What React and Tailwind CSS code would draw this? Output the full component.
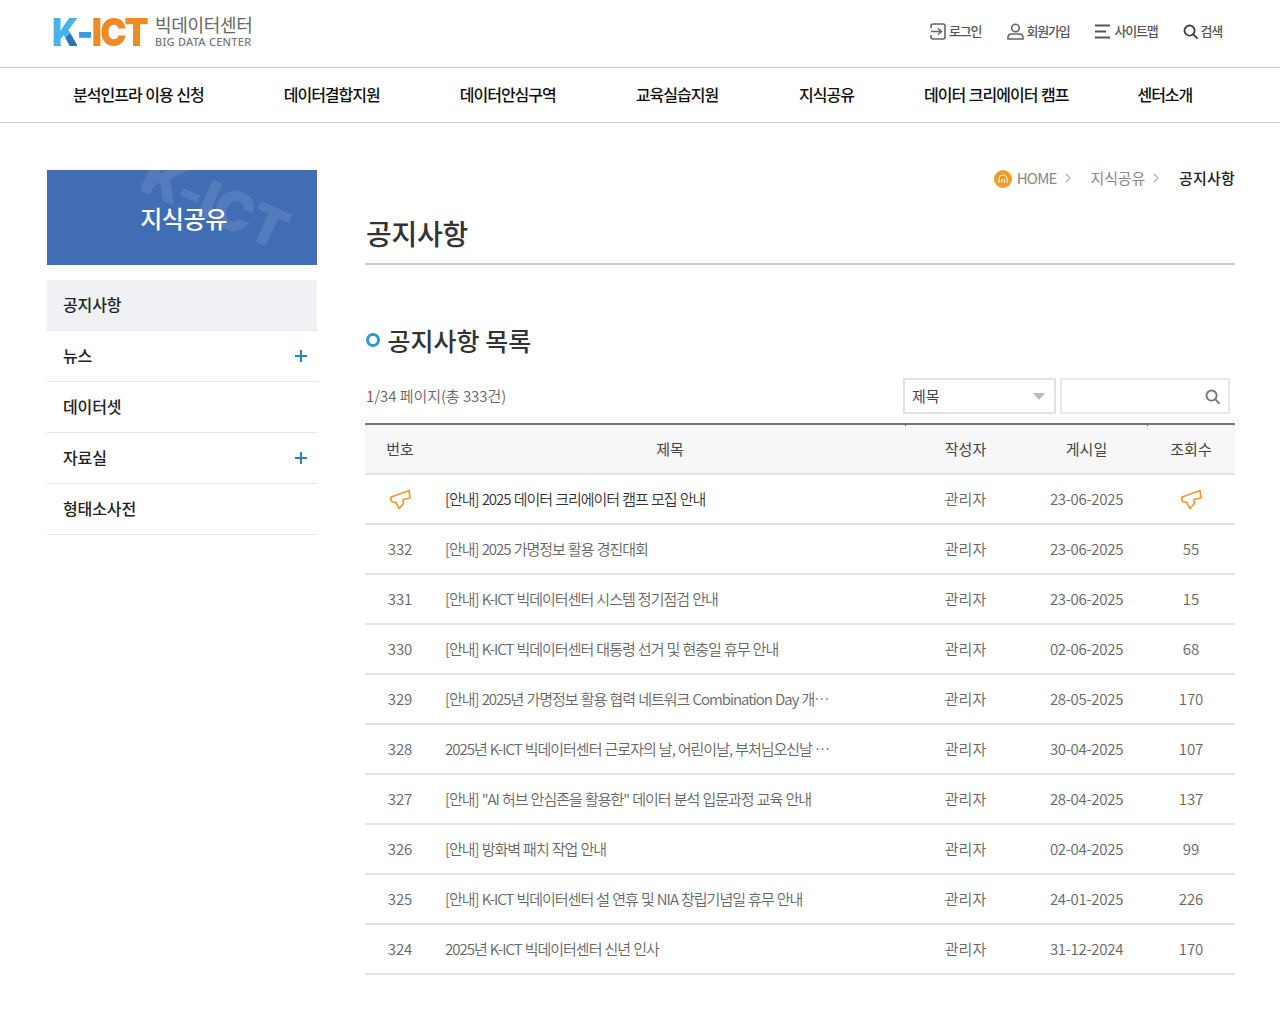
const rows = [
  ["notice", "[안내] 2025 데이터 크리에이터 캠프 모집 안내", "23-06-2025", "notice"],
  ["332", "[안내] 2025 가명정보 활용 경진대회", "23-06-2025", "55"],
  ["331", "[안내] K-ICT 빅데이터센터 시스템 정기점검 안내", "23-06-2025", "15"],
  ["330", "[안내] K-ICT 빅데이터센터 대통령 선거 및 현충일 휴무 안내", "02-06-2025", "68"],
  ["329", "[안내] 2025년 가명정보 활용 협력 네트워크 Combination Day 개…", "28-05-2025", "170"],
  ["328", "2025년 K-ICT 빅데이터센터 근로자의 날, 어린이날, 부처님오신날 …", "30-04-2025", "107"],
  ["327", "[안내] \"AI 허브 안심존을 활용한\" 데이터 분석 입문과정 교육 안내", "28-04-2025", "137"],
  ["326", "[안내] 방화벽 패치 작업 안내", "02-04-2025", "99"],
  ["325", "[안내] K-ICT 빅데이터센터 설 연휴 및 NIA 창립기념일 휴무 안내", "24-01-2025", "226"],
  ["324", "2025년 K-ICT 빅데이터센터 신년 인사", "31-12-2024", "170"],
];

const nav = [
  ["분석인프라 이용 신청", "pl-[73px] pr-10"],
  ["데이터결합지원", "px-10"],
  ["데이터안심구역", "px-10"],
  ["교육실습지원", "px-10"],
  ["지식공유", "pl-[41px] pr-[35px]"],
  ["데이터 크리에이터 캠프", "pl-[35px] pr-[34px]"],
  ["센터소개", "pl-[35px]"],
];

const side = [
  ["공지사항", false, true],
  ["뉴스", true, false],
  ["데이터셋", false, false],
  ["자료실", true, false],
  ["형태소사전", false, false],
];

function Megaphone() {
  return (
    <svg width="22" height="21" viewBox="0 0 22 21" fill="none" stroke="#f39a2b" strokeWidth="1.7" strokeLinejoin="round" strokeLinecap="round" className="inline-block align-middle -mt-[2px]">
      <path d="M2 8 L20 1.5 L21 9 L14 10.5 L14.5 14.5 L10 19.5 L6.5 13 L3.5 13 Q1 11.5 2 8 Z" />
    </svg>
  );
}

function Search({ size = 16, color = "#555" }) {
  return (
    <svg width={size} height={size} viewBox="0 0 16 16" fill="none" stroke={color} strokeWidth="2">
      <circle cx="7" cy="7" r="5.4" />
      <path d="M11 11 L15 15" strokeLinecap="round" />
    </svg>
  );
}

function Chevron() {
  return (
    <svg width="6" height="10" viewBox="0 0 6 10" fill="none" stroke="#b5b5b5" strokeWidth="1.4" className="ml-[8px] mr-[20px] -mt-[2px]">
      <path d="M1 1 L5 5 L1 9" />
    </svg>
  );
}

export default function App() {
  return (
    <div className="w-[1280px] h-[1024px] overflow-hidden bg-white font-['Noto_Sans_CJK_KR','Noto_Sans',sans-serif] text-[#333]">
      <header className="h-[68px] border-b border-[#c8c8c8] flex items-center justify-between pl-[52px] pr-[58px]">
        <div className="flex items-center h-full -mt-[5px]">
          <div className="flex items-center font-['Inter',sans-serif] font-black text-[39px] leading-none tracking-[-2px] w-[103px] scale-x-[0.9] origin-left">
            <span className="bg-[linear-gradient(135deg,#45b4ea_62%,#2f73b8_62%)] bg-clip-text text-transparent">K</span>
            <span className="text-[#3b9bd8]">-</span>
            <span className="text-[#f08a24]">ICT</span>
          </div>
          <div className="flex flex-col">
            <span className="text-[18px] leading-[22px] text-[#666] tracking-[-0.3px]">빅데이터센터</span>
            <span className="text-[11px] leading-[14px] font-medium text-[#777] font-['Noto_Sans',sans-serif] tracking-[0.25px]">BIG DATA CENTER</span>
          </div>
        </div>
        <div className="flex items-center gap-[26px] text-[13px] font-medium text-[#555] tracking-[-1.2px] -mt-[5px]">
          <a className="flex items-center gap-[3px]">
            <svg width="16" height="17" viewBox="0 0 16 17" fill="none" stroke="#666" strokeWidth="1.6">
              <path d="M1 5 V3 Q1 1 3 1 H13 Q15 1 15 3 V14 Q15 16 13 16 H3 Q1 16 1 14 V12" />
              <path d="M1 8.5 H11 M8 5.5 L11.5 8.5 L8 11.5" />
            </svg>
            로그인
          </a>
          <a className="flex items-center gap-[2px]">
            <svg width="17" height="17" viewBox="0 0 17 17" fill="none" stroke="#666" strokeWidth="1.6">
              <circle cx="8.5" cy="5" r="3.8" />
              <path d="M1 16 V14.5 Q1 11 4.5 11 H12.5 Q16 11 16 14.5 V16 Z" />
            </svg>
            회원가입
          </a>
          <a className="flex items-center gap-[3px]">
            <svg width="16" height="15" viewBox="0 0 16 15" stroke="#555" strokeWidth="1.8">
              <path d="M0 1.5 H15 M0 7.5 H11 M0 13.5 H15" />
            </svg>
            사이트맵
          </a>
          <a className="flex items-center gap-[2px]">
            <Search size={15} color="#444" />
            검색
          </a>
        </div>
      </header>

      <nav className="h-[55px] border-b border-[#d0d0d0] flex items-center text-[16px] font-medium text-[#111] tracking-[-1px] [word-spacing:1px] pb-[3px]">
        {nav.map(([t, c]) => (
          <a key={t} className={c}>{t}</a>
        ))}
      </nav>

      <div className="flex pl-[47px] pt-[47px]">
        <aside className="w-[270px] shrink-0">
          <div className="relative h-[95px] bg-[#416db4] overflow-hidden flex items-center justify-center pl-[3px]">
            <span className="absolute left-[92px] top-[6px] rotate-[24deg] font-['Inter',sans-serif] font-black text-[54px] leading-none text-white/10 tracking-[-1px]">K-ICT</span>
            <span className="relative text-[24px] font-medium text-white tracking-[-0.4px]">지식공유</span>
          </div>
          <ul className="mt-[15px]">
            {side.map(([t, plus, active]) => (
              <li key={t} className={`h-[51px] border-b border-[#e6e6e6] flex items-center justify-between pl-[16px] pr-[10px] text-[16px] font-medium text-[#222] tracking-[-0.1px] pb-[2px] ${active ? "bg-[#f0f1f4]" : ""}`}>
                <span>{t}</span>
                {plus && (
                  <svg width="12" height="12" viewBox="0 0 12 12" stroke="#1f86c9" strokeWidth="2" className="mt-[2px]"><path d="M6 0 V12 M0 6 H12" /></svg>
                )}
              </li>
            ))}
          </ul>
        </aside>

        <main className="ml-[48px] w-[870px]">
          <div className="flex items-center justify-end h-[17px] text-[15px] text-[#888] tracking-[-0.2px]">
            <svg width="18" height="18" viewBox="0 0 18 18" className="mr-[5px]">
              <circle cx="9" cy="9" r="9" fill="#f39a2b" />
              <path d="M5 13 V8.5 Q5 5 9 5 Q13 5 13 8.5 V13 M7.5 13 V10 H10.5 V13" fill="none" stroke="#fff" strokeWidth="1" />
            </svg>
            <span className="tracking-[-0.8px]">HOME</span>
            <Chevron />
            <span>지식공유</span>
            <Chevron />
            <span className="text-[#222] font-medium tracking-[0.2px]">공지사항</span>
          </div>

          <h1 className="mt-[26px] h-[50px] border-b-2 border-[#ccc] text-[28px] font-medium leading-[40px] text-[#333] tracking-[-0.25px] box-content pl-px">공지사항</h1>

          <h2 className="mt-[57px] flex items-center text-[25px] font-medium leading-[36px] text-[#333]">
            <span className="w-[14px] h-[14px] rounded-full border-[3px] border-[#2e9bcf] mr-[8px] ml-[0.5px]" />
            공지사항 목록
          </h2>

          <div className="mt-[20px] flex items-center justify-between h-[36px] pr-[5px]">
            <p className="text-[15px] text-[#666] tracking-[-0.05px] font-[350] pl-px"><span className="text-[#b93a36]">1</span>/34 페이지(총 333건)</p>
            <div className="flex gap-[4px]">
              <div className="w-[153px] h-[36px] border-2 border-[#e2e2e2] flex items-center justify-between pl-[7px] pr-[9px] text-[15px] text-[#444]">
                제목
                <span className="w-0 h-0 border-l-[6px] border-r-[6px] border-t-[7px] border-l-transparent border-r-transparent border-t-[#b5bcc6]" />
              </div>
              <div className="w-[170px] h-[36px] border-2 border-[#e8e8e8] flex items-center justify-end pr-[8px]">
                <Search size={15} color="#777" />
              </div>
            </div>
          </div>

          <table className="mt-[9px] w-[870px] table-fixed border-collapse text-[15px] text-[#666] font-[350]">
            <colgroup>
              <col className="w-[70px]" />
              <col className="w-[470px]" />
              <col className="w-[121px]" />
              <col className="w-[121px]" />
              <col className="w-[88px]" />
            </colgroup>
            <thead>
              <tr className="h-[50px] bg-[#f7f7f7] border-t-2 border-t-[#777] border-b-2 border-b-[#e2e2e2] text-[#444]">
                <th className="font-normal">번호</th>
                <th className="font-normal">제목</th>
                <th className="relative font-normal"><span className="absolute left-0 top-0 w-px h-px bg-[#555]" />작성자</th>
                <th className="font-normal">게시일</th>
                <th className="relative font-normal"><span className="absolute left-0 top-0 w-px h-px bg-[#555]" />조회수</th>
              </tr>
            </thead>
            <tbody>
              {rows.map(([n, title, date, views], i) => (
                <tr key={n + i} className="h-[50px] border-b-2 border-[#e4e4e4]">
                  <td className="text-center">{n === "notice" ? <Megaphone /> : n}</td>
                  <td className={`pl-[10px] tracking-[-1px] [word-spacing:0.75px] whitespace-nowrap overflow-hidden ${i === 0 ? "text-[#333]" : "text-[#666]"}`}>{title}</td>
                  <td className="text-center">관리자</td>
                  <td className="text-center tracking-[-0.3px]">{date}</td>
                  <td className="text-center">{views === "notice" ? <Megaphone /> : views}</td>
                </tr>
              ))}
            </tbody>
          </table>
        </main>
      </div>
    </div>
  );
}
